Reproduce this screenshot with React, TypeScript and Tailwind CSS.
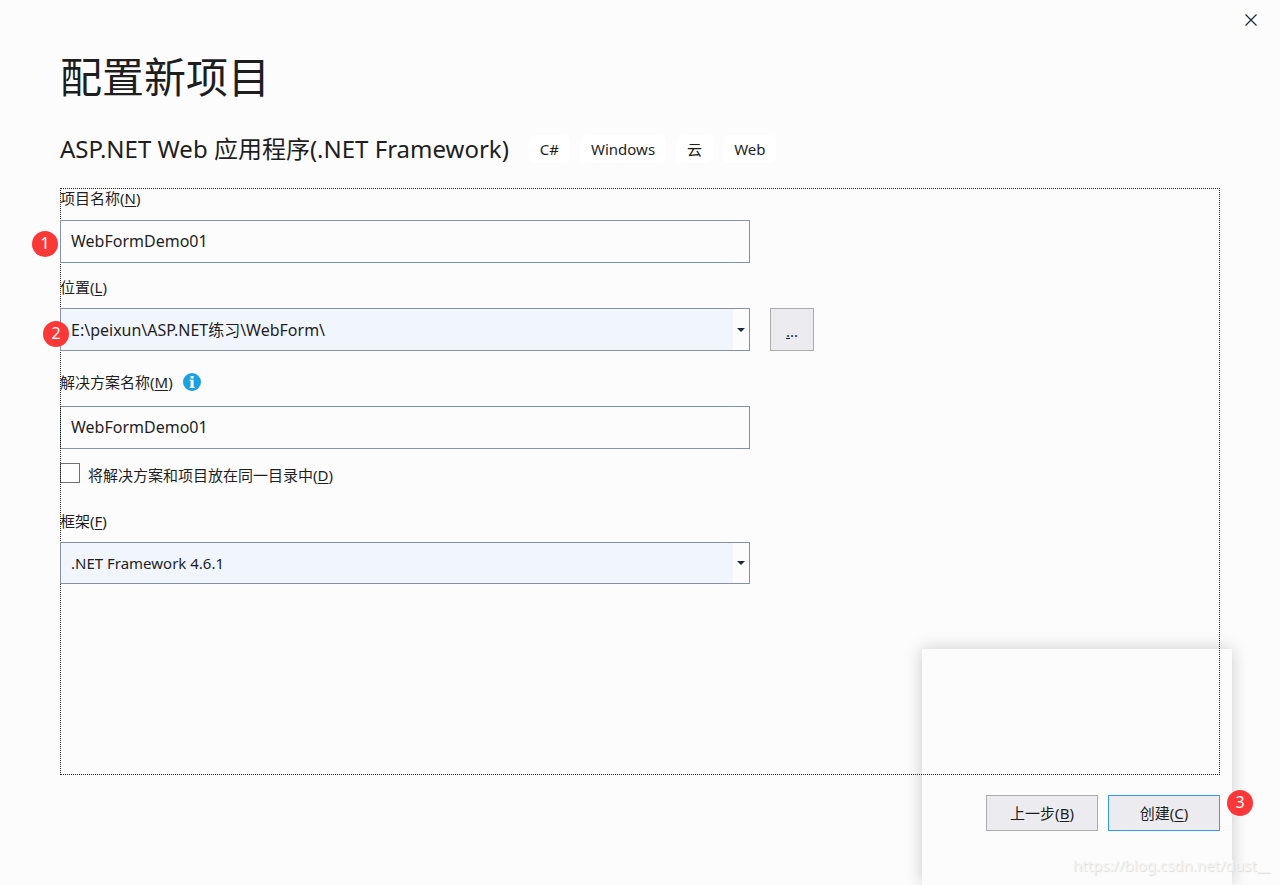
import type { ReactNode } from "react";

const tags = ["C#", "Windows", "云", "Web"];

function Key({ children }: { children: string }) {
  return (
    <>
      (<span className="underline decoration-1 underline-offset-2">{children}</span>)
    </>
  );
}

function Step({ n, className }: { n: number; className: string }) {
  return (
    <span
      className={`absolute z-20 flex h-[26px] w-[26px] justify-center rounded-full bg-[#fb3838] text-base leading-6 text-white ${className}`}
    >
      {n}
    </span>
  );
}

function TextBox({ id, value }: { id: string; value: string }) {
  return (
    <input
      id={id}
      type="text"
      defaultValue={value}
      className="block h-[43px] w-full border border-[#8591a5] bg-[#fcfcfc] px-2.5 pb-0.5 text-base outline-none"
    />
  );
}

function Combo({ id, value, className }: { id: string; value: string; className: string }) {
  return (
    <div className={`relative border border-[#8591a5] bg-[#f1f5fe] ${className}`}>
      <select id={id} defaultValue={value} className="block h-full w-full appearance-none px-2.5 outline-none">
        <option>{value}</option>
      </select>
      <span className="pointer-events-none absolute inset-y-0 right-0 flex w-4 items-center justify-center bg-[#fcfcfc]">
        <svg width="8" height="4" viewBox="0 0 8 4" fill="#1b293e">
          <path d="M0 0h8L4 4z" />
        </svg>
      </span>
    </div>
  );
}

function Label({ htmlFor, className, children }: { htmlFor: string; className: string; children: ReactNode }) {
  return (
    <label htmlFor={htmlFor} className={`block w-fit leading-5 ${className}`}>
      {children}
    </label>
  );
}

export default function App() {
  return (
    <div className="relative isolate flex min-h-screen flex-col overflow-hidden bg-[#fcfcfc] font-['Noto_Sans','Noto_Sans_CJK_SC',sans-serif] text-[15px] text-[#1e1e1e]">
      {/* floating panel behind the footer buttons */}
      <div className="absolute right-12 bottom-0 -z-10 h-[236px] w-[310px] bg-[#fcfcfc] shadow-[0_0_16px_rgba(0,0,0,0.2)]" />

      <header className="flex justify-end px-[9px]">
        <button type="button" aria-label="关闭" className="flex h-10 w-10 items-center justify-center">
          <svg width="12" height="12" viewBox="0 0 12 12" stroke="#1b293e" strokeWidth="1.2">
            <path d="M0.5 0.5l11 11M11.5 0.5l-11 11" />
          </svg>
        </button>
      </header>

      <main className="flex flex-1 flex-col px-[60px]">
        <h1 className="mt-[7px] text-[42px] leading-[60px]">配置新项目</h1>

        <div className="mt-[26px] flex items-center gap-5">
          <h2 className="text-2xl leading-8">ASP.NET Web 应用程序(.NET Framework)</h2>
          <ul className="flex gap-2.5">
            {tags.map((tag) => (
              <li key={tag} className="rounded-md bg-white px-[11px] leading-7">
                {tag}
              </li>
            ))}
          </ul>
        </div>

        <form className="mt-[23px] flex-1 outline-1 -outline-offset-1 outline-dotted outline-[#222222]">
          <div className="w-[690px] max-w-full">
            <Label htmlFor="name" className="mb-3">
              项目名称<Key>N</Key>
            </Label>
            <div className="relative">
              <TextBox id="name" value="WebFormDemo01" />
              <Step n={1} className="top-[11px] -left-7" />
            </div>

            <Label htmlFor="location" className="mt-3.5 mb-[11px]">
              位置<Key>L</Key>
            </Label>
            <div className="relative">
              <Combo id="location" value="E:\peixun\ASP.NET练习\WebForm\" className="h-[43px] text-base" />
              <Step n={2} className="top-[13px] -left-[17px]" />
              <button
                type="button"
                aria-label="浏览"
                className="absolute top-0 left-full ml-5 h-[43px] w-11 border border-[#acacac] bg-[#ececf0] pt-1"
              >
                <span className="underline">.</span>..
              </button>
            </div>

            <div className="mt-[21px] mb-3.5 flex items-center gap-2.5">
              <Label htmlFor="solution" className="">
                解决方案名称<Key>M</Key>
              </Label>
              <svg width="18" height="18" viewBox="0 0 18 18">
                <circle cx="9" cy="9" r="9" fill="#1ba1e2" />
                <path d="M7.6 3h3v2.4h-3zM6.6 6.8h4v7h1v1.2h-5v-1.2h1v-5.8h-1z" fill="#fff" />
              </svg>
            </div>
            <TextBox id="solution" value="WebFormDemo01" />

            <div className="mt-3.5 flex gap-2">
              <input
                id="same-dir"
                type="checkbox"
                className="h-5 w-5 appearance-none border border-[#717171] bg-[#fefefe] checked:bg-[#1ba1e2]"
              />
              <Label htmlFor="same-dir" className="pt-0.5">
                将解决方案和项目放在同一目录中<Key>D</Key>
              </Label>
            </div>

            <Label htmlFor="framework" className="mt-[26px] mb-[11px]">
              框架<Key>F</Key>
            </Label>
            <Combo id="framework" value=".NET Framework 4.6.1" className="h-[42px]" />
          </div>
        </form>

        <footer className="mt-5 mb-[54px] flex justify-end gap-2.5">
          <button type="button" className="h-9 w-28 border border-[#acacac] bg-[#ececf0]">
            上一步<Key>B</Key>
          </button>
          <div className="relative">
            <button type="button" className="h-9 w-28 border border-[#3399ff] bg-[#ececf0]">
              创建<Key>C</Key>
            </button>
            <Step n={3} className="-top-[5px] -right-[33px]" />
          </div>
        </footer>
      </main>

      <p className="absolute right-2.5 bottom-2 text-[15px] leading-6 text-[#f4f4f4] [text-shadow:1px_1px_1px_#dcdcdc]">
        https://blog.csdn.net/dust__
      </p>
    </div>
  );
}
